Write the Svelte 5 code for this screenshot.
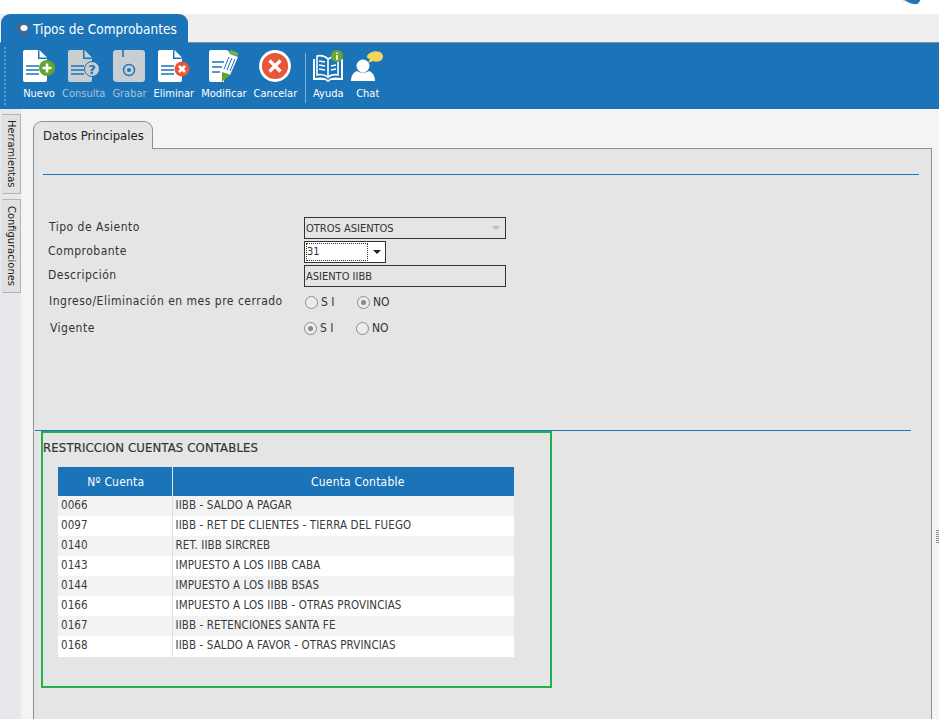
<script lang="ts">
  const rows = [
    ['0066', 'IIBB - SALDO A PAGAR'],
    ['0097', 'IIBB - RET DE CLIENTES - TIERRA DEL FUEGO'],
    ['0140', 'RET. IIBB SIRCREB'],
    ['0143', 'IMPUESTO A LOS IIBB CABA'],
    ['0144', 'IMPUESTO A LOS IIBB BSAS'],
    ['0166', 'IMPUESTO A LOS IIBB - OTRAS PROVINCIAS'],
    ['0167', 'IIBB - RETENCIONES SANTA FE'],
    ['0168', 'IIBB - SALDO A FAVOR - OTRAS PRVINCIAS']
  ]
</script>

{#snippet doc(fill: string, lines: string)}
  <path d="M0 2a2 2 0 0 1 2-2h13l9 9v21a2 2 0 0 1-2 2H2a2 2 0 0 1-2-2z" fill={fill} />
  <path d="M15 0v9h9z" fill={lines} />
  <path d="M16.500 0l7.500 7.500h-7.500z" fill={fill} />
  <path d="M3 16h13M3 20h13M3 24h13" stroke={lines} stroke-width="1.600" />
{/snippet}

<div class="page">
  <div class="top">
    <svg class="logo" width="30" height="14" viewBox="0 0 30 14">
      <path d="M0 0h5l8 7-6-2z" fill="#bdbdbd" />
      <path d="M4 0h22c0 7-3 10-7 9-4 0-10-4-15-9z" fill="#1f76bb" />
    </svg>
  </div>

  <div class="tabbar">
    <div class="apptab">
      <svg width="16" height="16" viewBox="0 0 16 16">
        <path d="M0 8c1-4 4-7 8-7h7l-1 9c-1 3-3 5-6 5-3-1-7-3-8-7z" fill="#3a6a94" />
        <ellipse cx="9" cy="7" rx="3.500" ry="3" fill="#fff" />
      </svg>
      <span>Tipos de Comprobantes</span>
    </div>
  </div>

  <div class="toolbar">
    <div class="grip"></div>

    <div class="tool">
      <svg width="32" height="32" viewBox="0 0 32 32">
        {@render doc('#fff', '#1c74b8')}
        <circle cx="24" cy="18" r="8" fill="#5fa52e" />
        <path d="M24 13.500v9M19.500 18h9" stroke="#fff" stroke-width="2.600" />
      </svg>
      <span>Nuevo</span>
    </div>
    <div class="tool off">
      <svg width="32" height="32" viewBox="0 0 32 32">
        {@render doc('#c9ced3', '#1c74b8')}
        <circle cx="24" cy="19" r="7.500" fill="#c9ced3" stroke="#1c74b8" stroke-width="1" />
        <text x="24" y="24" class="qm">?</text>
      </svg>
      <span>Consulta</span>
    </div>
    <div class="tool off">
      <svg width="32" height="32" viewBox="0 0 32 32">
        <path d="M3 0h26a3 3 0 0 1 3 3v26a3 3 0 0 1-3 3H4a4 4 0 0 1-4-4V3a3 3 0 0 1 3-3z" fill="#c9ced3" />
        <path d="M10 0v7" stroke="#1c74b8" stroke-width="1.600" />
        <circle cx="16" cy="20" r="5.500" fill="none" stroke="#1c74b8" stroke-width="1.400" />
        <circle cx="16" cy="20" r="2" fill="#1c74b8" />
      </svg>
      <span>Grabar</span>
    </div>
    <div class="tool">
      <svg width="32" height="32" viewBox="0 0 32 32">
        {@render doc('#fff', '#1c74b8')}
        <circle cx="24" cy="19" r="7.500" fill="#e8563a" />
        <path d="M21 16l6 6M27 16l-6 6" stroke="#fff" stroke-width="2.600" />
      </svg>
      <span>Eliminar</span>
    </div>
    <div class="tool">
      <svg width="32" height="32" viewBox="0 0 32 32">
        <path d="M1 2a2 2 0 0 1 2-2h14c3 0 5 2 5 4v6l-6 14v8H3a2 2 0 0 1-2-2z" fill="#fff" />
        <path d="M4 12h12M4 17h10M4 22h8" stroke="#1c74b8" stroke-width="1.600" />
        <path d="M22 4l8 3-8 18-7-3z" fill="#fff" />
        <path d="M21 7l-5 12M24 8l-5 12M27 9l-5 12" stroke="#1c74b8" stroke-width="1" />
        <path d="M22.500 0l8 3-1.500 3-8-3z" fill="#7fb23a" />
        <path d="M14 22l8 3-8 7z" fill="#5fa52e" />
      </svg>
      <span>Modificar</span>
    </div>
    <div class="tool">
      <svg width="32" height="32" viewBox="0 0 32 32">
        <circle cx="16" cy="16" r="14.500" fill="#e8563a" stroke="#fff" stroke-width="2.800" />
        <path d="M10.500 10.500l11 11M21.500 10.500l-11 11" stroke="#fff" stroke-width="3.200" />
      </svg>
      <span>Cancelar</span>
    </div>

    <div class="sep"></div>

    <div class="tool">
      <svg width="32" height="32" viewBox="0 0 32 32">
        <path d="M1 9h2v19c5-1 10-1 13 2 3-3 8-3 13-2V9h2v21H19l-3 2-3-2H1z" fill="#fff" />
        <path d="M5 6c4-1 8 0 11 3v18c-3-2-7-3-11-2zM16 9c3-2 6-3 10-3v19c-4-1-7 0-10 2z" fill="none" stroke="#fff" stroke-width="1.600" />
        <path d="M7 11l6 1M7 15l6 1M7 19l6 1M19 16l5-1M19 20l5-1" stroke="#fff" stroke-width="1.400" />
        <circle cx="25" cy="6" r="6" fill="#6aa832" />
        <path d="M25 2.500v1.500M25 5v5" stroke="#fff" stroke-width="1.600" />
      </svg>
      <span>Ayuda</span>
    </div>
    <div class="tool">
      <svg width="33" height="32" viewBox="0 0 33 32">
        <circle cx="12" cy="16" r="6.500" fill="#fff" />
        <path d="M0 31c0-6 3-9 6-10 3 2 9 2 12 0 3 1 6 4 6 10z" fill="#fff" />
        <path d="M16 6c2-4 9-6 13-4 4 2 4 7 0 9-3 1-5 1-7 0l-5 2 2-4c-2 0-3-1-3-3z" fill="#f5d45e" />
      </svg>
      <span>Chat</span>
    </div>
  </div>

  <div class="body">
    <div class="side">
      <div class="vtab first"><span>Herramientas</span></div>
      <div class="vtab"><span>Configuraciones</span></div>
    </div>

    <div class="main">
      <div class="ptab">Datos Principales</div>
      <div class="panel">
        <div class="rule"></div>

        <div class="form">
          <div class="frow r1">
            <label>Tipo de Asiento</label>
            <div class="field wide dis"><span>OTROS ASIENTOS</span><i class="caret grey"></i></div>
          </div>
          <div class="frow r2">
            <label>Comprobante</label>
            <div class="field narrow"><span class="focus">31</span><i class="caret"></i></div>
          </div>
          <div class="frow r3">
            <label>Descripción</label>
            <div class="field wide"><span>ASIENTO IIBB</span></div>
          </div>
          <div class="frow r4">
            <label>Ingreso/Eliminación en mes pre cerrado</label>
            <div class="radios">
              <span class="radio"></span><b class="si">S I</b>
              <span class="radio on"></span><b>NO</b>
            </div>
          </div>
          <div class="frow r5">
            <label>Vigente</label>
            <div class="radios">
              <span class="radio on"></span><b class="si">S I</b>
              <span class="radio"></span><b>NO</b>
            </div>
          </div>
        </div>

        <div class="rule two"></div>

        <section class="restr">
          <h3>RESTRICCION CUENTAS CONTABLES</h3>
          <table>
            <thead>
              <tr><th class="c1">Nº Cuenta</th><th class="c2">Cuenta Contable</th></tr>
            </thead>
            <tbody>
              {#each rows as r}
                <tr><td class="c1">{r[0]}</td><td>{r[1]}</td></tr>
              {/each}
            </tbody>
          </table>
        </section>
      </div>
    </div>
    <div class="dragdots"></div>
  </div>
</div>

<style>
  :global(body) { margin: 0; background: #f4f4f4; }

  .page {
    width: 939px;
    height: 719px;
    overflow: hidden;
    display: flex;
    flex-direction: column;
    font-family: "DejaVu Sans", "Noto Sans", sans-serif;
    font-stretch: condensed;
    font-size: 12px;
    color: #333;
  }

  .top { height: 14px; background: #fff; position: relative; flex: none; }
  .logo { position: absolute; left: 895px; top: -5px; }

  .tabbar {
    height: 28px;
    flex: none;
    background: #eee;
    border-bottom: 1px solid #8a8f94;
    padding-left: 1px;
    box-sizing: content-box;
  }
  .apptab {
    width: 187px;
    height: 29px;
    background: #1c74b8;
    border-radius: 9px 9px 0 0;
    color: #fff;
    display: flex;
    align-items: center;
    gap: 2px;
    padding-left: 14px;
    box-sizing: border-box;
    font-size: 13.500px;
    white-space: nowrap;
  }

  .toolbar {
    height: 66px;
    flex: none;
    background: #1c74b8;
    display: flex;
    align-items: flex-start;
    gap: 7px;
    padding: 7px 0 0 4px;
    box-sizing: border-box;
  }
  .grip {
    width: 0;
    height: 58px;
    margin-top: -3px;
    border-left: 2px dotted #5d9ccc;
    margin-right: 10px;
  }
  .tool {
    display: flex;
    flex-direction: column;
    align-items: center;
    color: #fff;
    font-size: 11px;
    line-height: 14px;
    white-space: nowrap;
  }
  .tool svg { display: block; margin-bottom: 5px; }
  .tool.off { color: #a9c2d8; }
  .sep {
    width: 1px;
    height: 50px;
    margin: 3px -1px 0 1px;
    background: #7fb0d6;
  }
  .qm { font: bold 13px "DejaVu Sans", sans-serif; fill: #1c74b8; text-anchor: middle; }

  .body { flex: 1; display: flex; min-height: 0; position: relative; }

  .side {
    width: 21px;
    flex: none;
    background: #e7e7ec;
    padding: 5px 0 0 2px;
    box-sizing: border-box;
  }
  .vtab {
    writing-mode: vertical-rl;
    background: #e1e1e1;
    border: 1px solid #b4b4b4;
    border-left-color: #ddd;
    width: 19px;
    box-sizing: border-box;
    display: flex;
    align-items: center;
    justify-content: center;
    font-size: 11px;
    color: #222;
    height: 94px;
    margin-top: 5px;
  }
  .vtab.first { height: 80px; margin-top: 0; }

  .main {
    margin: 12px 7px 0 12px;
    width: 899px;
    flex: none;
    display: flex;
    flex-direction: column;
  }
  .ptab {
    width: 120px;
    height: 28px;
    box-sizing: border-box;
    background: #e5e5e5;
    border: 1px solid #8a9298;
    border-bottom: none;
    border-radius: 9px 9px 0 0;
    font-size: 13px;
    color: #222;
    padding: 6px 0 0 9px;
    position: relative;
    z-index: 1;
  }
  .panel {
    flex: 1;
    background: #e5e5e5;
    border: 1px solid #8a9298;
    border-bottom: none;
    margin-top: -1px;
    box-sizing: border-box;
    padding-top: 25px;
  }
  .rule { height: 1px; background: #1c74b8; margin: 0 12px 0 9px; }
  .rule.two { margin: 0 20px 0 1px; }

  .form { height: 255px; padding: 42px 0 0 0; box-sizing: border-box; }
  .frow { display: flex; align-items: center; height: 22px; margin-bottom: 2px; }
  .frow label {
    width: 255px;
    flex: none;
    box-sizing: border-box;
    padding: 0 0 3px 14px;
    font-size: 12px;
    letter-spacing: 0.5px;
    color: #333;
    white-space: nowrap;
  }
  .r1 label { padding-left: 15px; }
  .r4 { margin-top: 4px; margin-bottom: 4px; }
  .r4 label { padding-left: 15px; }
  .r5 label { padding-left: 16px; padding-bottom: 0; }
  .r5 .radios { margin-left: 15px; }

  .field {
    height: 22px;
    box-sizing: border-box;
    border: 1px solid #333;
    display: flex;
    align-items: center;
    justify-content: space-between;
    padding: 0 1px;
    font-size: 11px;
    margin-left: 15px;
  }
  .wide { width: 202px; }
  .narrow { width: 82px; background: #fff; }
  .focus { border: 1px dotted #333; width: 60px; height: 16px; line-height: 16px; }
  .caret {
    width: 0;
    height: 0;
    border: 4px solid transparent;
    border-top: 4px solid #222;
    border-bottom: none;
    margin-right: 3px;
  }
  .caret.grey { border-top-color: #bbb; margin-right: 4px; }

  .radios { display: flex; align-items: center; margin-left: 16px; }
  .radios b { font-weight: 400; font-size: 12px; margin-left: 3px; color: #333; }
  .radios .si { width: 36px; }
  .radio {
    width: 13px;
    height: 13px;
    box-sizing: border-box;
    border: 1px solid #8d8d8d;
    border-radius: 50%;
    background: #ececec;
    display: block;
    position: relative;
  }
  .radio.on::after {
    content: "";
    position: absolute;
    left: 3px;
    top: 3px;
    width: 5px;
    height: 5px;
    border-radius: 50%;
    background: #8a8a8a;
  }

  .restr {
    width: 511px;
    height: 257px;
    box-sizing: border-box;
    border: 2px solid #22b14c;
    margin-left: 7px;
    padding: 6px 0 0 0;
  }
  .restr h3 {
    margin: 0 0 11px;
    font-size: 13px;
    font-weight: 400;
    color: #333;
    line-height: 17px;
    letter-spacing: 0.150px;
    -webkit-text-stroke: 0.2px #333;
  }
  table {
    margin-left: 15px;
    width: 456px;
    border-collapse: collapse;
    font-size: 11.500px;
    letter-spacing: 0.100px;
  }
  th {
    background: #1c74b8;
    color: #fff;
    font-weight: 400;
    height: 29px;
    padding: 0;
    font-size: 12px;
    letter-spacing: 0.2px;
  }
  th.c1 { width: 114px; border-right: 1px solid #e5e5e5; padding-left: 2px; box-sizing: border-box; }
  th.c2 { padding-left: 29px; }
  td { height: 20px; padding: 0 0 2px 3px; box-sizing: border-box; color: #3a3a3a; }
  td.c1 { border-right: 1px solid #e0e0e0; padding-left: 3px; }
  tbody tr:nth-child(odd) td { background: #f3f3f3; }
  tbody tr:nth-child(even) td { background: #fff; }
  tbody tr:last-child td { height: 21px; padding-bottom: 3px; }

  .dragdots {
    position: absolute;
    left: 936px;
    top: 421px;
    width: 3px;
    height: 14px;
    background: repeating-linear-gradient(#8a8f99 0 1px, transparent 1px 2px);
  }
</style>
